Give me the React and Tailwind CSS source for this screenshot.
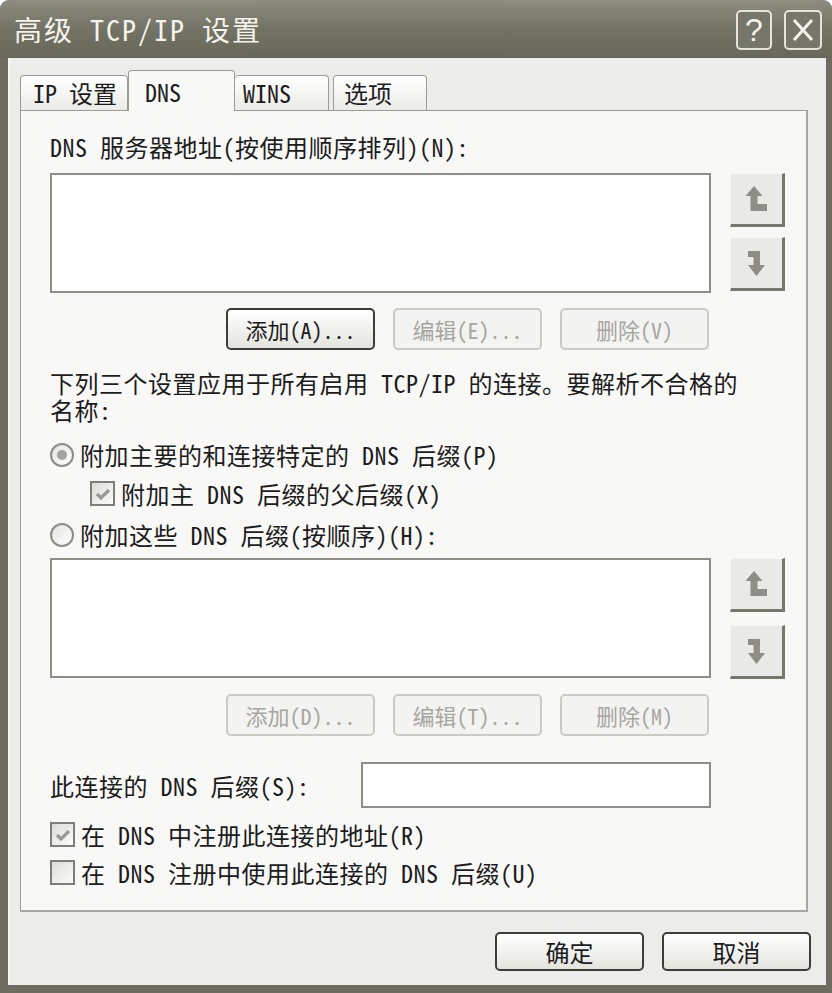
import React from 'react';

const UpIcon = () => (
    <svg width="24" height="28" viewBox="0 0 24 28">
        <path d="M9 1 L17.5 11 L12.5 11 L12.5 19 L22 19 L22 26 L5.5 26 L5.5 11 L0.5 11 Z" fill="#8e8e86" />
    </svg>
);

const DownIcon = () => (
    <svg width="24" height="28" viewBox="0 0 24 28">
        <path d="M3 2 L15 2 L15 16 L20 16 L11.5 27 L3 16 L8.5 16 L8.5 8 L3 8 Z" fill="#8e8e86" />
    </svg>
);

const MoveButton = ({ children }) => (
    <div className="w-[55px] h-[54px] flex items-center justify-center bg-[#e9e9e6] border-t border-l border-t-[#f6f6f4] border-l-[#f6f6f4] border-r-[3px] border-b-[3px] border-r-[#77776b] border-b-[#77776b]">
        {children}
    </div>
);

const XpButton = ({ label, disabled, wide }) => (
    <div
        className={`w-[149px] ${wide ? 'h-[39px] text-[24px]' : 'h-[42px] text-[22px]'} rounded-[5px] border-2 flex items-center justify-center leading-none ${
            disabled
                ? 'border-[#cbcbc5] bg-[#f3f3f1] text-[#a6a6a0]'
                : 'border-[#3e3e36] bg-gradient-to-b from-[#ffffff] to-[#e4e4de] text-[#1c1c1c]'
        }`}
    >
        {label}
    </div>
);

const Radio = ({ checked }) => (
    <span className="w-[24px] h-[24px] rounded-full border-2 border-[#8d8d85] bg-gradient-to-br from-[#e2e2de] to-[#ffffff] flex items-center justify-center shrink-0">
        {checked && <span className="w-[10px] h-[10px] rounded-full bg-[#a4a49e]" />}
    </span>
);

const Check = ({ checked }) => (
    <span className="w-[25px] h-[25px] border-2 border-[#7e7e76] bg-gradient-to-br from-[#dcdcd8] to-[#fbfbf9] flex items-center justify-center shrink-0">
        {checked && (
            <svg width="16" height="14" viewBox="0 0 16 14">
                <path d="M2 7 L6 11 L14 3" stroke="#9a9a94" strokeWidth="3.2" fill="none" />
            </svg>
        )}
    </span>
);

const ListBox = () => (
    <div className="w-[661px] h-[120px] bg-white border-2 border-[#8e8e86]" />
);

export default function App() {
    return (
        <div className="w-[832px] h-[993px] bg-[#6c6c60] rounded-t-[9px] flex flex-col font-['Noto_Sans_Mono_CJK_SC','Noto_Sans_CJK_SC',monospace] text-[#1c1c1c] overflow-hidden">
            {/* title bar */}
            <div className="h-[58px] shrink-0 flex items-center justify-between pl-[14px] pr-[10px] bg-gradient-to-b from-[#8d8d80] via-[#727265] to-[#67675a] rounded-t-[9px]">
                <span className="text-[28px] tracking-[2px] text-[#f4f4ec] leading-none">高级 TCP/IP 设置</span>
                <div className="flex gap-[12px] mt-[2px]">
                    <div className="w-[36px] h-[40px] rounded-[5px] border-2 border-[#e4e4dc] bg-[#76766a] flex items-center justify-center text-[32px] text-[#f4f4ec] leading-none font-['Liberation_Sans',sans-serif]">?</div>
                    <div className="w-[38px] h-[40px] rounded-[5px] border-2 border-[#e4e4dc] bg-[#76766a] flex items-center justify-center">
                        <svg width="24" height="26" viewBox="0 0 24 26">
                            <path d="M3 3 L21 23 M21 3 L3 23" stroke="#f4f4ec" strokeWidth="3" />
                        </svg>
                    </div>
                </div>
            </div>

            {/* client area */}
            <div className="flex-1 ml-[8px] mr-[6px] mb-[8px] bg-[#ececea] border-l-2 border-[#f6f6f2] flex flex-col pt-[11px] pl-[10px] pr-[18px]">
                {/* tabs */}
                <div className="flex items-end h-[41px] relative z-10 text-[24px] leading-none">
                    <div className="w-[108px] h-[35px] border border-b-0 border-[#9c9c96] rounded-t-[4px] bg-gradient-to-b from-[#ffffff] to-[#ebebe7] flex items-center pl-[12px]">IP 设置</div>
                    <div className="w-[107px] h-[41px] -mb-px border border-b-0 border-[#9c9c96] rounded-t-[4px] bg-[#f8f8f6] flex items-start pt-[9px] pl-[16px]">DNS</div>
                    <div className="w-[94px] h-[35px] border border-b-0 border-l-0 border-[#9c9c96] rounded-t-[4px] bg-gradient-to-b from-[#ffffff] to-[#ebebe7] flex items-center pl-[8px]">WINS</div>
                    <div className="w-[94px] h-[35px] ml-[4px] border border-b-0 border-[#9c9c96] rounded-t-[4px] bg-gradient-to-b from-[#ffffff] to-[#ebebe7] flex items-center pl-[10px]">选项</div>
                </div>

                {/* tab panel */}
                <div className="h-[802px] bg-[#f8f8f6] border border-[#9c9c96] border-b-2 border-r-2 border-b-[#a8a8a2] border-r-[#a8a8a2] pl-[29px] text-[24px] tracking-[0.5px] leading-[27px] flex flex-col">
                    <div className="mt-[22px]">DNS 服务器地址(按使用顺序排列)(N):</div>

                    <div className="mt-[13px] flex gap-[19px]">
                        <ListBox />
                        <div className="flex flex-col gap-[10px]">
                            <MoveButton><UpIcon /></MoveButton>
                            <MoveButton><DownIcon /></MoveButton>
                        </div>
                    </div>

                    <div className="mt-[15px] w-[661px] flex justify-end gap-[18px] pr-[2px] tracking-normal">
                        <XpButton label="添加(A)..." />
                        <XpButton label="编辑(E)..." disabled />
                        <XpButton label="删除(V)" disabled />
                    </div>

                    <div className="mt-[19px]">
                        下列三个设置应用于所有启用 TCP/IP 的连接。要解析不合格的
                        <br />
                        名称:
                    </div>

                    <div className="mt-[18px] flex items-center gap-[6px] h-[27px]">
                        <Radio checked />
                        <span>附加主要的和连接特定的 DNS 后缀(P)</span>
                    </div>
                    <div className="mt-[12px] ml-[40px] flex items-center gap-[6px] h-[27px]">
                        <Check checked />
                        <span>附加主 DNS 后缀的父后缀(X)</span>
                    </div>
                    <div className="mt-[14px] flex items-center gap-[6px] h-[27px]">
                        <Radio />
                        <span>附加这些 DNS 后缀(按顺序)(H):</span>
                    </div>

                    <div className="mt-[10px] flex gap-[19px]">
                        <ListBox />
                        <div className="flex flex-col gap-[13px]">
                            <MoveButton><UpIcon /></MoveButton>
                            <MoveButton><DownIcon /></MoveButton>
                        </div>
                    </div>

                    <div className="mt-[15px] w-[661px] flex justify-end gap-[18px] pr-[2px] tracking-normal">
                        <XpButton label="添加(D)..." disabled />
                        <XpButton label="编辑(T)..." disabled />
                        <XpButton label="删除(M)" disabled />
                    </div>

                    <div className="mt-[26px] flex items-center w-[661px] justify-between">
                        <span>此连接的 DNS 后缀(S):</span>
                        <div className="w-[350px] h-[46px] bg-white border-2 border-[#8e8e86]" />
                    </div>

                    <div className="mt-[13px] flex items-center gap-[6px] h-[27px]">
                        <Check checked />
                        <span>在 DNS 中注册此连接的地址(R)</span>
                    </div>
                    <div className="mt-[11px] flex items-center gap-[6px] h-[27px]">
                        <Check />
                        <span>在 DNS 注册中使用此连接的 DNS 后缀(U)</span>
                    </div>
                </div>

                {/* dialog buttons */}
                <div className="mt-[20px] flex justify-end gap-[18px] -mr-[3px]">
                    <XpButton label="确定" wide />
                    <XpButton label="取消" wide />
                </div>
            </div>
        </div>
    );
}
